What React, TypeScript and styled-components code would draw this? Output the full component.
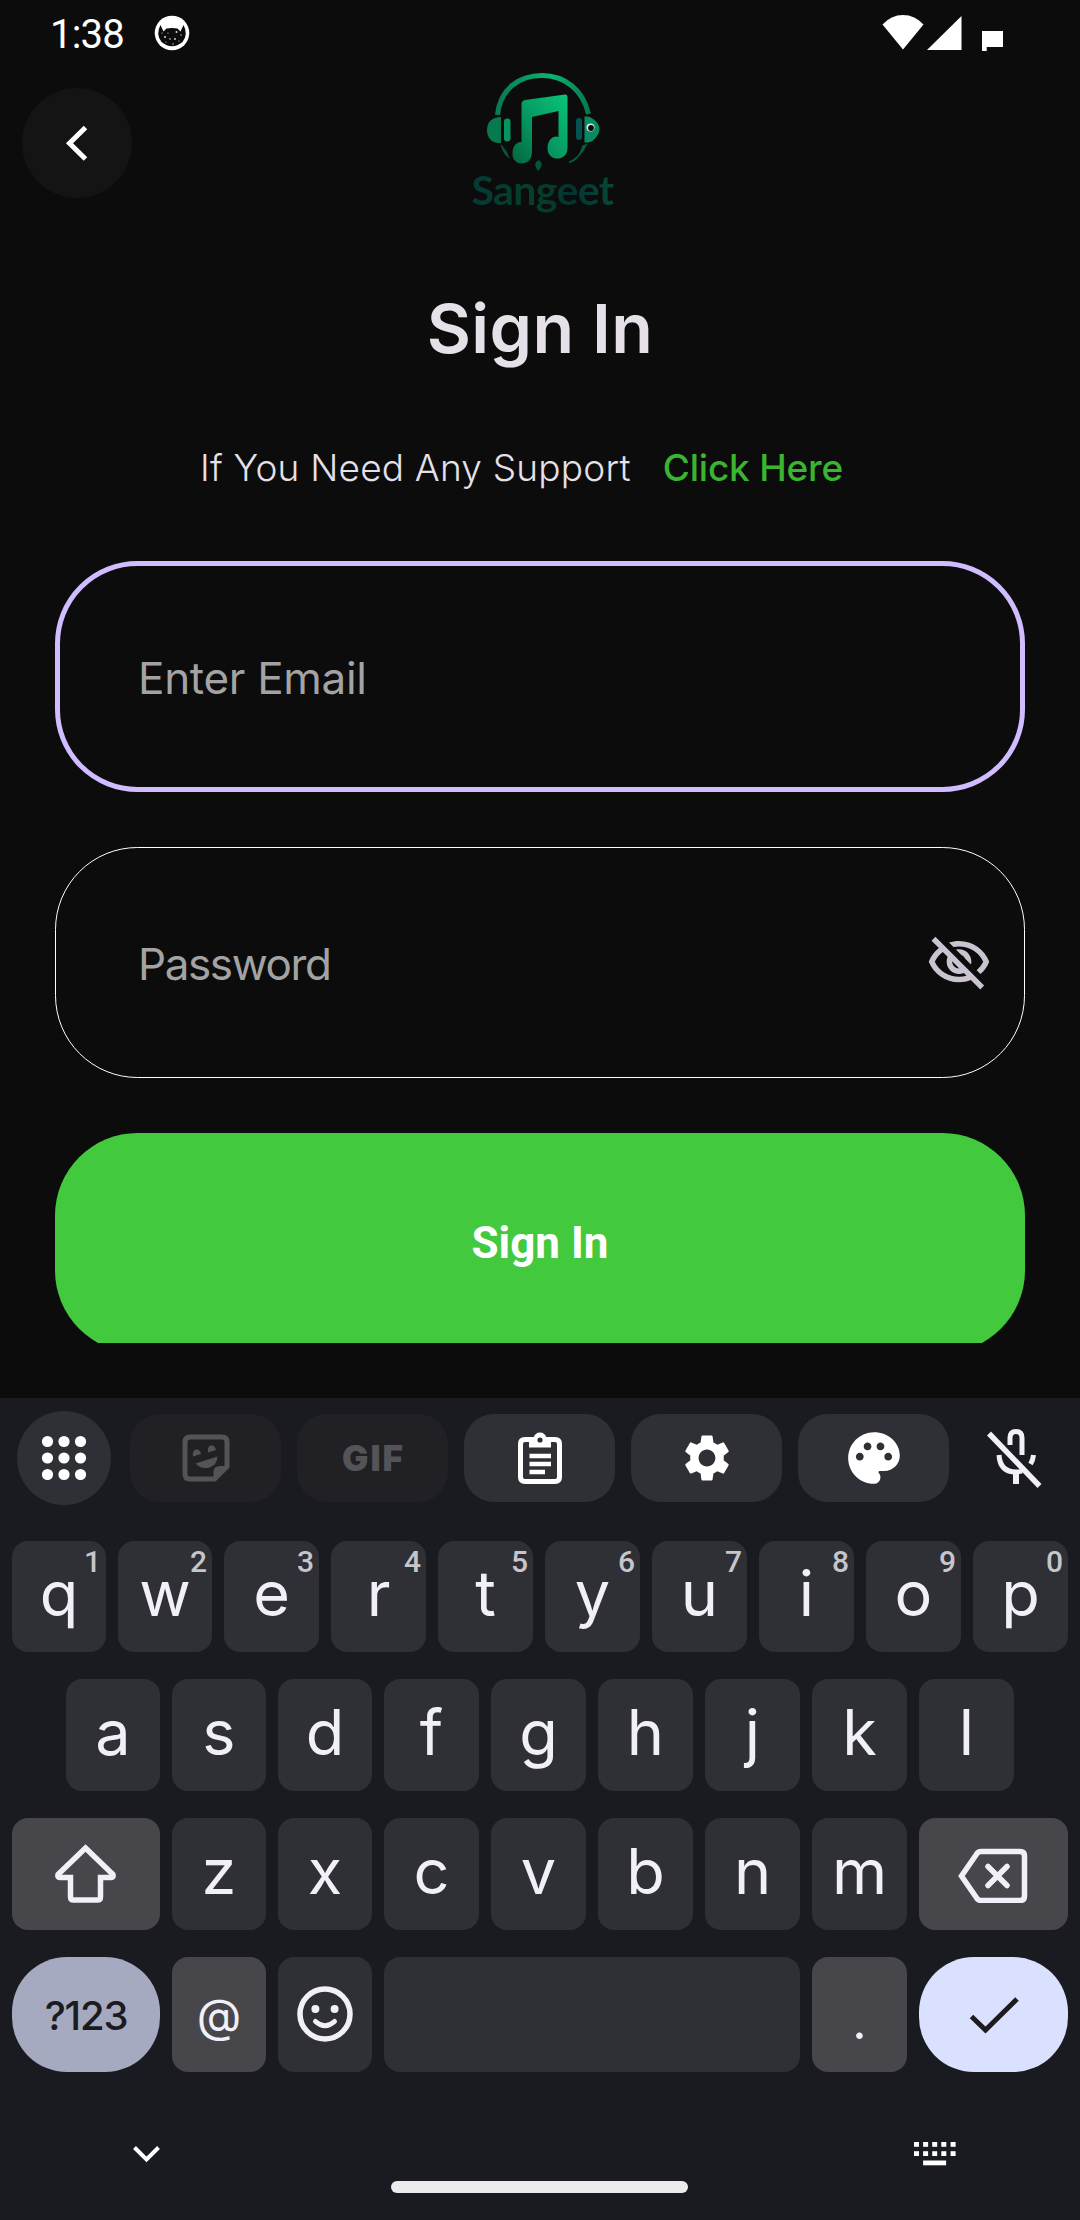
import React from "react";
import styled, { createGlobalStyle } from "styled-components";
import { MdOutlineVisibilityOff, MdSettings, MdPalette } from "react-icons/md";

const Global = createGlobalStyle`
  html, body { margin: 0; padding: 0; background: #0c0c0c; }
  *, *::before, *::after { box-sizing: border-box; }
  button { border: 0; padding: 0; margin: 0; font: inherit; color: inherit; }
`;

const Screen = styled.div`
  width: 1080px;
  height: 2220px;
  overflow: hidden;
  display: flex;
  flex-direction: column;
  background: #0c0c0c;
  font-family: Inter, "Liberation Sans", sans-serif;
`;

const Content = styled.main`
  height: 1343px;
  overflow: hidden;
  display: flex;
  flex-direction: column;
  flex: none;
`;

const StatusBar = styled.div`
  height: 66px;
  flex: none;
  display: flex;
  justify-content: space-between;
  align-items: center;
  padding: 0 76px 0 50px;
  color: #fff;
`;
const StatusGroup = styled.div`
  display: flex;
  align-items: center;
`;
const Clock = styled.span`
  font: 400 40px/66px Roboto, sans-serif;
  width: 104px;
  padding-top: 3px;
  letter-spacing: -0.8px;
`;

const Header = styled.header`
  height: 156px;
  flex: none;
  display: grid;
  grid-template-columns: 110px 1fr 110px;
  padding: 0 22px;
`;
const BackButton = styled.button`
  width: 110px;
  height: 110px;
  margin-top: 22px;
  border-radius: 50%;
  background: #141414;
  display: grid;
  place-items: center;
`;
const Logo = styled.div`
  display: flex;
  flex-direction: column;
  align-items: center;
  padding: 6px 0 0 5px;
`;
const LogoName = styled.span`
  font: 700 41px/56px Lato, sans-serif;
  letter-spacing: -0.6px;
  margin-top: -14px;
  background: linear-gradient(90deg, #063a36, #04402a 45%, #05342f 70%, #07483a);
  background-clip: text;
  -webkit-background-clip: text;
  color: transparent;
`;

const Title = styled.h1`
  margin: 66px 0 0;
  height: 80px;
  font: 600 68px/80px Inter, sans-serif;
  letter-spacing: 0.4px;
  text-align: center;
  color: #e6e0e9;
`;
const Support = styled.p`
  margin: 76px 0 0;
  padding-left: 200px;
  height: 48px;
  display: flex;
  gap: 32px;
  font-size: 37px;
  font-weight: 300;
  line-height: 48px;
  letter-spacing: 0.2px;
  color: #e6e0e9;
`;
const SupportLink = styled.a`
  color: #39b52f;
  font-weight: 500;
  letter-spacing: -0.2px;
`;

const Form = styled.form`
  margin: 69px 55px 0;
  display: flex;
  flex-direction: column;
  gap: 55px;
`;
const Field = styled.div<{ $active?: boolean }>`
  height: 231px;
  flex: none;
  border-radius: 82.5px;
  border: ${p => (p.$active ? "5.5px solid #d0bcff" : "1px solid #fff")};
  padding: 0 ${p => (p.$active ? "27px 0 78px" : "32px 0 82px")};
  display: flex;
  align-items: center;
  justify-content: space-between;
  color: #a3a3a3;
`;
const Placeholder = styled.span<{ $track: number }>`
  font-size: 44px;
  line-height: 54px;
  padding-top: 2px;
  letter-spacing: ${p => p.$track}px;
`;
const Submit = styled.button`
  height: 220px;
  flex: none;
  border-radius: 82.5px;
  background: #43c93d;
  color: #fff;
  font: 700 44px/52px Roboto, sans-serif;
`;

const Keyboard = styled.section`
  margin-top: 55px;
  flex: 1;
  background: #1a1b20;
  display: flex;
  flex-direction: column;
  font-family: Inter, sans-serif;
  color: #f1eff7;
`;
const Toolbar = styled.div`
  height: 120px;
  padding: 0 38px 0 17px;
  display: flex;
  align-items: center;
`;
const AppsButton = styled.button`
  width: 94px;
  height: 94px;
  border-radius: 50%;
  background: #2f3035;
  display: grid;
  place-items: center;
  margin-right: 19px;
`;
const Tools = styled.div`
  display: flex;
  gap: 16px;
  flex: 1;
`;
const Tool = styled.button<{ $off?: boolean }>`
  width: 151px;
  height: 88px;
  border-radius: 30px;
  display: grid;
  place-items: center;
  background: ${p => (p.$off ? "#212025" : "#2f3035")};
  color: ${p => (p.$off ? "#545358" : "#fff")};
`;
const Gif = styled.span`
  font: 900 35px/40px Inter, sans-serif;
  letter-spacing: 2px;
  padding-left: 2px;
`;

const Keys = styled.div`
  padding: 23px 12px 0;
  display: flex;
  flex-direction: column;
  gap: 27px;
`;
const KeyRow = styled.div<{ $columns: string; $inset?: boolean; $height: number }>`
  display: grid;
  grid-template-columns: ${p => p.$columns};
  gap: 12px;
  height: ${p => p.$height}px;
  padding: 0 ${p => (p.$inset ? 54 : 0)}px;
`;
const Key = styled.button<{ $tone?: "mod" | "symbols" | "enter" }>`
  position: relative;
  border-radius: ${p => (p.$tone === "symbols" || p.$tone === "enter" ? 55 : 16)}px;
  background: ${p =>
    p.$tone === "mod" ? "#47464b" : p.$tone === "symbols" ? "#a5aac1" : p.$tone === "enter" ? "#dae1ff" : "#2f3035"};
  color: ${p => (p.$tone === "symbols" || p.$tone === "enter" ? "#1b1b20" : "#f1eff7")};
  display: flex;
  align-items: center;
  justify-content: center;
`;
const Letter = styled.span`
  font: 400 63px/70px Inter, sans-serif;
  padding-bottom: 7px;
`;
const Hint = styled.span`
  position: absolute;
  top: 4px;
  right: 5px;
  font: 500 30px/34px Roboto, sans-serif;
  color: #c6c5ca;
`;
const KeyLabel = styled.span<{ $size: number; $drop?: number; $weight?: number; $track?: number }>`
  font-family: Inter, sans-serif;
  font-size: ${p => p.$size}px;
  font-weight: ${p => p.$weight ?? 400};
  line-height: 60px;
  padding-top: ${p => p.$drop ?? 0}px;
  letter-spacing: ${p => p.$track ?? 0}px;
`;

const NavBar = styled.div`
  flex: 1;
  display: grid;
  grid-template-columns: 262px 297px 1fr;
  padding: 68px 121px 0 129px;
  color: #fff;
`;
const HomeBar = styled.div`
  height: 12px;
  margin-top: 41px;
  border-radius: 6px;
  background: #ececec;
`;
const NavEnd = styled.div`
  display: flex;
  justify-content: flex-end;
  padding-top: 2px;
`;

const CatBadge = () => (
  <svg width="36" height="36" viewBox="0 0 36 36">
    <circle cx="18" cy="18" r="17.3" fill="#fff" />
    <path d="M6.500 10 L9.500 16.500 L12.500 13.500 Q18 12.500 23.500 13.500 L26.500 16.500 L29.500 10 Q34.500 19 28.500 27 Q18 35.500 7.500 27 Q1.500 19 6.500 10Z" fill="#0c0c0c" />
    <g fill="#ddd">
      <circle cx="11" cy="22" r="1" /><circle cx="22.500" cy="17" r="1" /><circle cx="16" cy="24" r=".8" />
      <circle cx="21" cy="24" r=".9" /><circle cx="27" cy="20" r=".7" /><circle cx="8" cy="18" r=".6" />
      <circle cx="14" cy="18" r=".6" /><circle cx="19" cy="29" r=".7" /><circle cx="12" cy="27" r=".6" />
      <circle cx="25" cy="26" r=".6" />
    </g>
  </svg>
);

const SystemIcons = () => (
  <svg width="122" height="40" viewBox="0 0 122 40" fill="#fff">
    <path d="M0.500 11.500 Q9 2 21 2 Q33 2 41.500 11.500 L21 36.500Z" />
    <path d="M79.500 3 V37 H45Z" />
    <path d="M100 18 H121 V34 H104.700 V38 H100Z" />
  </svg>
);

const LogoMark = () => (
  <svg width="116" height="104" viewBox="0 0 116 104">
    <defs>
      <linearGradient id="note" x1="0" y1="1" x2="1" y2="0">
        <stop offset="0" stopColor="#04653f" /><stop offset=".5" stopColor="#069a63" /><stop offset="1" stopColor="#0bc577" />
      </linearGradient>
      <linearGradient id="band" x1="0" y1="0" x2="1" y2="0">
        <stop offset="0" stopColor="#087a55" /><stop offset=".6" stopColor="#0bb571" /><stop offset="1" stopColor="#067a4c" />
      </linearGradient>
    </defs>
    <path d="M12.500 43 C15 17 34 3.500 57 3.500 C80 3.500 98 18 103.500 42" fill="none" stroke="url(#band)" strokeWidth="5" />
    <path d="M16 45 V71 C7 72 2 66 2 58 C2 50 7 45 16 45Z" fill="#07794f" />
    <rect x="19" y="46.500" width="6.500" height="23" rx="3.200" fill="#08945f" />
    <rect x="91" y="46" width="6" height="22" rx="3" fill="#065252" />
    <path d="M99.500 44.500 H103 C109 46 114.500 52 114.500 57 C114.500 62 109 70 103 70.500 H99.500Z" fill="#088b63" />
    <circle cx="105.500" cy="55.500" r="4" fill="#dfe9e6" /><circle cx="106" cy="56" r="2.900" fill="#0a0a0a" />
    <path d="M16 73 C18 79 20 83 24 86 L21 79Z" fill="#06563a" stroke="#06563a" />
    <path d="M101 73 C97 82 91 87 84 90.500 C92 88 96 82 98 74Z" fill="#05603b" stroke="#05603b" strokeWidth="1.500" />
    <path d="M36.500 31 Q37 28.500 40 28 L80 22.500 Q82.500 22 82.500 25 V76 C82.500 90 62.500 90 62.500 76.500 C62.500 67 69 63 73.500 65 V39 L47 45 V80 C47 95 27.500 95 27.500 82 C27.500 73 32 70 36.500 70Z" fill="url(#note)" />
    <path d="M54 88 q4 3 2 7 l-2.500 4 q-5 -5 -2.500 -9z" fill="#05533d" />
  </svg>
);

const Dots = () => (
  <svg width="46" height="46" viewBox="0 0 46 46" fill="#fff">
    {[6.5, 23, 39.5].map(y => [6.5, 23, 39.5].map(x => <circle key={`${x}-${y}`} cx={x} cy={y} r="5.600" />))}
  </svg>
);
const Sticker = () => (
  <svg width="48" height="48" viewBox="0 0 48 48" fill="currentColor">
    <path d="M8 3 H40 Q45 3 45 8 V32.500 L32.500 45 H8 Q3 45 3 40 V8 Q3 3 8 3Z" fill="none" stroke="currentColor" strokeWidth="5" />
    <path d="M31.500 46 V38 Q31.500 32 38 32 H46 L33 46Z" />
    <path d="M11 22.500 q-1 -6 3 -7 q4 -.5 5 4.500z M26 18.500 q-1 -6 3 -7 q4 -.5 5 4.500z" />
    <path d="M13.500 29.500 L35.500 22.500 Q35 31 27.500 33.500 Q19.500 35.500 13.500 29.500Z" />
  </svg>
);
const Clipboard = () => (
  <svg width="44" height="52" viewBox="0 0 44 52" fill="none" stroke="currentColor" strokeWidth="5">
    <path d="M7 7.500 H37 Q41.500 7.500 41.500 12 V45 Q41.500 49.500 37 49.500 H7 Q2.500 49.500 2.500 45 V12 Q2.500 7.500 7 7.500Z" />
    <path d="M11 6 H15.500 Q17 .5 22 .5 Q27 .5 28.500 6 H33 V15.500 H11Z" fill="currentColor" stroke="none" />
    <circle cx="22" cy="8" r="2.600" fill="#2f3035" stroke="none" />
    <path d="M11.500 24 H33 M11.500 32 H33 M11.500 40 H27" strokeWidth="4.400" />
  </svg>
);
const MicOff = () => (
  <svg width="56" height="60" viewBox="0 0 56 60" fill="none" stroke="currentColor" strokeWidth="5">
    <path d="M24 17 V10 Q24 3.500 30 3.500 Q36 3.500 36 10 V27" />
    <path d="M13 27 Q14 44 30 44 Q33 44 36 43 M47.500 27 Q47 32 44.500 36" />
    <path d="M30 43 V56" strokeWidth="6" />
    <path d="M3 5.500 L53.500 58" strokeWidth="5.500" />
  </svg>
);
const Shift = () => (
  <svg width="64" height="62" viewBox="0 0 64 62" fill="none" stroke="currentColor" strokeWidth="5.500">
    <path d="M31.500 5 L59 31.500 Q60 34.500 57 34.500 H46.500 V54 Q46.500 57 43.500 57 H19.500 Q16.500 57 16.500 54 V34.500 H6 Q3 34.500 4 31.500Z" />
  </svg>
);
const Backspace = () => (
  <svg width="72" height="58" viewBox="0 -3.500 72 58" fill="none" stroke="currentColor" strokeWidth="5.500" strokeLinecap="round">
    <path d="M23 3 H62 Q66.500 3 66.500 7.500 V47.500 Q66.500 52 62 52 H23 Q20.500 52 19 50 L3.500 27.500 L19 5 Q20.500 3 23 3Z" />
    <path d="M30 18 L49 37 M49 18 L30 37" />
  </svg>
);
const Smile = () => (
  <svg width="56" height="58" viewBox="0 0 56 58" fill="none" stroke="currentColor" strokeWidth="5.500">
    <circle cx="28" cy="28" r="25" />
    <circle cx="18.400" cy="23" r="4" fill="currentColor" stroke="none" />
    <circle cx="37.600" cy="23" r="4" fill="currentColor" stroke="none" />
    <path d="M18.500 35.500 Q28 44 37.500 35.500" strokeWidth="5" strokeLinecap="round" />
  </svg>
);
const Check = () => (
  <svg width="50" height="38" viewBox="0 0 50 38" fill="none" stroke="currentColor" strokeWidth="5">
    <path d="M2.500 20.500 L16.500 34 L48 3" />
  </svg>
);
const KeyboardGlyph = () => (
  <svg width="45" height="24" viewBox="0 0 45 24" fill="#fff">
    {[0, 9.2].map(y => [0, 9.1, 18.2, 27.3, 36.6].map(x => <rect key={`${x}-${y}`} x={x} y={y} width="5" height="4.800" />))}
    <rect x="9.100" y="18.500" width="23" height="4.800" />
  </svg>
);

const TOP = "qwertyuiop".split("");
const HOME = "asdfghjkl".split("");
const BOTTOM = "zxcvbnm".split("");

export default function App() {
  return (
    <Screen>
      <Global />
      <Content>
        <StatusBar>
          <StatusGroup><Clock>1:38</Clock><CatBadge /></StatusGroup>
          <SystemIcons />
        </StatusBar>
        <Header>
          <BackButton aria-label="Back">
            <svg width="24" height="38" viewBox="0 0 24 38" fill="none" stroke="#fff" strokeWidth="5">
              <path d="M20.500 3.500 L4.500 19.300 L20.500 35" />
            </svg>
          </BackButton>
          <Logo><LogoMark /><LogoName>Sangeet</LogoName></Logo>
        </Header>
        <Title>Sign In</Title>
        <Support><span>If You Need Any Support</span><SupportLink>Click Here</SupportLink></Support>
        <Form>
          <Field $active><Placeholder $track={-0.3}>Enter Email</Placeholder></Field>
          <Field>
            <Placeholder $track={-1.4}>Password</Placeholder>
            <MdOutlineVisibilityOff size={66} color="#cac4d0" />
          </Field>
          <Submit type="button">Sign In</Submit>
        </Form>
      </Content>
      <Keyboard>
        <Toolbar>
          <AppsButton aria-label="Apps"><Dots /></AppsButton>
          <Tools>
            <Tool $off><Sticker /></Tool>
            <Tool $off><Gif>GIF</Gif></Tool>
            <Tool><Clipboard /></Tool>
            <Tool><MdSettings size={56} /></Tool>
            <Tool><MdPalette size={62} /></Tool>
          </Tools>
          <MicOff />
        </Toolbar>
        <Keys>
          <KeyRow $height={111} $columns="94px 94px repeat(8, 95px)">
            {TOP.map((c, i) => <Key key={c}><Letter>{c}</Letter><Hint>{(i + 1) % 10}</Hint></Key>)}
          </KeyRow>
          <KeyRow $height={112} $inset $columns="repeat(3, 94px) repeat(6, 95px)">
            {HOME.map(c => <Key key={c}><Letter>{c}</Letter></Key>)}
          </KeyRow>
          <KeyRow $height={112} $columns="148px 94px 94px repeat(5, 95px) 149px">
            <Key $tone="mod" aria-label="Shift"><Shift /></Key>
            {BOTTOM.map(c => <Key key={c}><Letter>{c}</Letter></Key>)}
            <Key $tone="mod" aria-label="Backspace"><Backspace /></Key>
          </KeyRow>
          <KeyRow $height={115} $columns="148px 94px 94px 416px 95px 149px">
            <Key $tone="symbols"><KeyLabel $size={40} $weight={500} $drop={3} $track={-1.2}>?123</KeyLabel></Key>
            <Key $tone="mod"><KeyLabel $size={46}>@</KeyLabel></Key>
            <Key aria-label="Emoji"><Smile /></Key>
            <Key aria-label="Space" />
            <Key $tone="mod"><KeyLabel $size={50} $drop={12}>.</KeyLabel></Key>
            <Key $tone="enter" aria-label="Done"><Check /></Key>
          </KeyRow>
        </Keys>
        <NavBar>
          <svg width="34" height="34" viewBox="0 0 34 34" fill="none" stroke="#fff" strokeWidth="4">
            <path d="M5.500 7.500 L17.500 19.500 L29.500 7.500" />
          </svg>
          <HomeBar />
          <NavEnd><KeyboardGlyph /></NavEnd>
        </NavBar>
      </Keyboard>
    </Screen>
  );
}
